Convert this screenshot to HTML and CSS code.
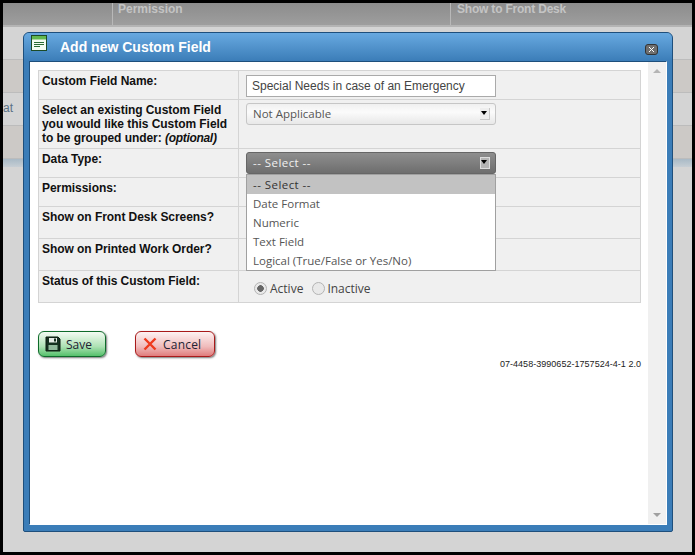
FILE: index.html
```html
<!DOCTYPE html>
<html lang="en">
<head>
  <meta charset="UTF-8" />
  <title>Add new Custom Field</title>
  <link rel="stylesheet" href="styles.css">
</head>
<body>
  <div class="page">
    <!-- Dimmed list behind the dialog -->
    <div class="list-head">
      <span class="head-cell head-first"></span>
      <span class="head-cell head-perm">Permission</span>
      <span class="head-cell head-desk">Show to Front Desk</span>
    </div>
    <div class="list-row"></div>
    <div class="list-row alt"></div>
    <div class="list-row"><span class="peek">at</span></div>
    <div class="list-row alt"></div>
    <div class="list-foot"></div>

    <div class="dialog">
      <div class="dialog-title">
        <svg class="title-icon" width="16" height="16" viewBox="0 0 16 16">
          <rect x="0.5" y="0.5" width="15" height="15" fill="#f4fbf2" stroke="#1c4a26"/>
          <rect x="1" y="1" width="14" height="3.5" fill="#62b84e"/>
          <path d="M3 7.5h10M3 9.5h10M3 11.5h6" stroke="#2a6b35" stroke-width="1"/>
        </svg>
        <span class="title-text">Add new Custom Field</span>
        <button class="close" title="Close">
          <svg width="7" height="7" viewBox="0 0 7 7"><path d="M1 1l5 5M6 1l-5 5" stroke="#fff" stroke-width="1"/></svg>
        </button>
      </div>

      <div class="dialog-body">
        <div class="content">
          <table class="form-table">
            <tr class="r-name">
              <th>Custom Field Name:</th>
              <td><input class="text-input" type="text" value="Special Needs in case of an Emergency"></td>
            </tr>
            <tr class="r-group">
              <th>Select an existing Custom Field you would like this Custom Field to be grouped under: <em>(optional)</em></th>
              <td>
                <div class="select"><span>Not Applicable</span><i class="arrow"></i></div>
              </td>
            </tr>
            <tr class="r-type">
              <th>Data Type:</th>
              <td>
                <div class="select-wrap">
                  <div class="select open"><span class="dashes">-- Select --</span><i class="arrow"></i></div>
                  <ul class="menu">
                    <li class="current dashes">-- Select --</li>
                    <li>Date Format</li>
                    <li>Numeric</li>
                    <li>Text Field</li>
                    <li>Logical (True/False or Yes/No)</li>
                  </ul>
                </div>
              </td>
            </tr>
            <tr class="r-perm"><th>Permissions:</th><td></td></tr>
            <tr class="r-front"><th>Show on Front Desk Screens?</th><td></td></tr>
            <tr class="r-print"><th>Show on Printed Work Order?</th><td></td></tr>
            <tr class="r-status">
              <th>Status of this Custom Field:</th>
              <td>
                <div class="radios">
                  <i class="radio checked"></i><span class="radio-label">Active</span>
                  <i class="radio off"></i><span>Inactive</span>
                </div>
              </td>
            </tr>
          </table>

          <div class="actions">
            <button class="btn btn-save">
              <svg width="16" height="16" viewBox="0 0 16 16">
                <path d="M1 1h12l2 2v12H1z" fill="#14301f" stroke="#0c1a10"/>
                <rect x="4" y="2" width="8" height="4.5" fill="#e6ece6"/>
                <rect x="9" y="2.5" width="2" height="3" fill="#14301f"/>
                <rect x="3.5" y="9" width="9" height="5" fill="#8fb89a"/>
              </svg>
              Save
            </button>
            <button class="btn btn-cancel">
              <svg width="14" height="14" viewBox="0 0 14 14"><path d="M1.5 1.5l11 11M12.5 1.5l-11 11" stroke="#ee3a1c" stroke-width="2.4"/></svg>
              Cancel
            </button>
          </div>
          <div class="build-id">07-4458-3990652-1757524-4-1 2.0</div>
        </div>

        <div class="scrollbar">
          <i class="scroll-up"></i>
          <i class="scroll-down"></i>
        </div>
      </div>
    </div>
  </div>
</body>
</html>
```

FILE: styles.css
```css
html, body {
  margin: 0;
  padding: 0;
  height: 100%;
  background: #000;
}

.page {
  position: relative;
  box-sizing: border-box;
  margin: 3px 3px 0 3px;
  width: 689px;
  height: 549px;
  background: #d4d4d4;
  overflow: hidden;
  font-family: "Liberation Sans", Arial, sans-serif;
}

/* background list */
.list-head {
  display: flex;
  height: 22px;
  background: linear-gradient(#8c8c8c, #9e9e9e);
  border-bottom: 2px solid #b4b4b4;
}

.head-cell {
  padding-left: 5px;
  border-left: 1px solid #b8b8b8;
  color: #c4c4c4;
  font-size: 12px;
  font-weight: bold;
  line-height: 12px;
}

.head-first { width: 104px; border-left: none; }
.head-perm { width: 332px; }
.head-desk { padding-left: 6px; letter-spacing: -0.2px; }

.list-row {
  box-sizing: border-box;
  height: 33px;
  border-bottom: 1px solid #bcbcbc;
  background: #d4d4d4;
  font-size: 12px;
  color: #5a7286;
}

.list-row.alt { background: #ccc9c6; }

.peek {
  display: block;
  padding-top: 8px;
  font-size: 12px;
}

.list-foot {
  height: 8px;
  background: linear-gradient(#a9bac6, #c6ced4);
}

/* dialog */
.dialog {
  position: absolute;
  left: 20px;
  top: 29px;
  width: 650px;
  height: 500px;
  box-sizing: border-box;
  display: flex;
  flex-direction: column;
  background: #3b7db8;
  border: 1px solid #1e4f7c;
  border-radius: 6px 6px 2px 2px;
  padding: 0 5px 6px 5px;
}

.dialog-title {
  display: flex;
  align-items: center;
  height: 28px;
  margin: 0 -5px;
  padding: 0 14px 0 7px;
  background: linear-gradient(#68a9e0, #3b7db8);
  border-radius: 5px 5px 0 0;
  flex-shrink: 0;
}

.title-icon {
  margin-top: -9px;
}

.title-text {
  margin-left: 13px;
  color: #fff;
  font-size: 14px;
  font-weight: bold;
}

.close {
  display: flex;
  align-items: center;
  justify-content: center;
  margin-left: auto;
  margin-top: 4px;
  padding: 0;
  width: 13px;
  height: 11px;
  background: #6f6f6f;
  border: 1px solid #333;
  border-radius: 3px;
}

.dialog-body {
  flex: 1;
  display: flex;
  background: #fff;
  border-top: 1px solid #1e4f7c;
  border-left: 1px solid #1e4f7c;
  border-right: 1px solid #fff;
  border-bottom: 1px solid #fff;
  min-height: 0;
}

.content {
  flex: 1;
  padding: 8px 6px 0 8px;
}

.form-table {
  width: 603px;
  border-collapse: collapse;
  table-layout: fixed;
  background: #f0f0f0;
}

.form-table th,
.form-table td {
  border: 1px solid #d4d4d4;
  vertical-align: top;
  padding: 0;
}

.form-table th {
  width: 190px;
  padding: 3px 6px 0 3px;
  text-align: left;
  font-size: 12px;
  line-height: 14px;
  font-weight: bold;
  letter-spacing: -0.05px;
  color: #111;
}

.form-table em {
  font-style: italic;
  letter-spacing: -0.3px;
}

.form-table td { padding-left: 7px; }

.r-name { height: 29px; }
.r-group { height: 49px; }
.r-type { height: 29px; }
.r-perm { height: 29px; }
.r-front { height: 32px; }
.r-print { height: 32px; }
.r-status { height: 32px; }

.text-input {
  box-sizing: border-box;
  display: block;
  margin-top: 4px;
  width: 250px;
  height: 22px;
  padding: 1px 5px;
  border: 1px solid #aaa;
  background: #fff;
  font-family: "Liberation Sans", Arial, sans-serif;
  font-size: 12px;
  color: #444;
}

.select-wrap { position: relative; }

.select {
  box-sizing: border-box;
  display: flex;
  align-items: center;
  justify-content: space-between;
  margin-top: 3px;
  width: 250px;
  height: 22px;
  padding: 0 5px 2px 6px;
  border: 1px solid #c6c6c6;
  border-radius: 3px;
  background: linear-gradient(#f0f0f0, #fbfbfb 40%, #e8e8e8);
  font-family: "Open Sans", sans-serif;
  font-size: 11.5px;
  color: #555;
}

.select.open {
  border-color: #666;
  background: linear-gradient(#8e8e8e, #6e6e6e);
  color: #f0f0f0;
}

.dashes { letter-spacing: 0.45px; }

.arrow {
  position: relative;
  box-sizing: border-box;
  width: 10px;
  height: 12px;
  margin-top: 2px;
  background: #eee;
  border-right: 1px solid #c8c8c8;
  border-bottom: 1px solid #c8c8c8;
}

.open .arrow {
  background: #b4b4b4;
  border: 1px solid #ddd;
}

.arrow::after {
  content: "";
  position: absolute;
  left: 1px;
  top: 3px;
  border-left: 3.5px solid transparent;
  border-right: 3.5px solid transparent;
  border-top: 4px solid #000;
}

.open .arrow::after { left: 0; top: 2px; }

.menu {
  position: absolute;
  left: 0;
  top: 22px;
  box-sizing: border-box;
  width: 250px;
  margin: 0;
  padding: 0;
  list-style: none;
  background: #fff;
  border: 1px solid #a0a0a0;
  font-family: "Open Sans", sans-serif;
  font-size: 11.5px;
  color: #555;
}

.menu li {
  height: 19px;
  line-height: 19px;
  padding-left: 6px;
}

.menu li.current {
  background: #c2c2c2;
  color: #333;
}

.radios {
  display: flex;
  align-items: center;
  margin-top: 9px;
  padding-left: 8px;
  font-family: "Open Sans", sans-serif;
  font-size: 12px;
  color: #444;
}

.radio {
  box-sizing: border-box;
  width: 13px;
  height: 13px;
  margin-right: 3px;
  border: 1px solid #b4b4b4;
  border-radius: 50%;
  background: #e9e9e9;
}

.radio.off { margin-right: 2px; }

.radio.checked {
  background: radial-gradient(circle, #666 0 3px, #e9e9e9 3.6px);
}

.radio-label { margin-right: 9px; }

.actions {
  display: flex;
  gap: 29px;
  margin-top: 28px;
}

.btn {
  box-sizing: border-box;
  display: flex;
  align-items: center;
  gap: 5px;
  height: 26px;
  padding: 0 0 0 6px;
  border-radius: 6px;
  font-family: "Open Sans", sans-serif;
  font-size: 12px;
  color: #223;
  box-shadow: 1px 1px 2px #777;
}

.btn-save {
  width: 68px;
  border: 1px solid #0e6b2a;
  background: linear-gradient(#f3fbf3, #aee2b4 60%, #55c06b);
}

.btn-cancel {
  width: 80px;
  gap: 6px;
  padding-left: 7px;
  letter-spacing: 0.2px;
  border: 1px solid #a81a1a;
  background: linear-gradient(#fdf2f2, #f0bcbc 60%, #e07c7c);
}

.build-id {
  margin-top: 2px;
  width: 603px;
  text-align: right;
  font-size: 9px;
  letter-spacing: 0.03px;
  color: #222;
}

.scrollbar {
  position: relative;
  width: 18px;
  background: #f0f0f0;
  flex-shrink: 0;
}

.scroll-up,
.scroll-down {
  position: absolute;
  left: 5px;
  border-left: 4px solid transparent;
  border-right: 4px solid transparent;
}

.scroll-up { top: 7px; border-bottom: 4px solid #b5b5b5; }
.scroll-down { bottom: 7px; border-top: 4px solid #a0a0a0; }
```
